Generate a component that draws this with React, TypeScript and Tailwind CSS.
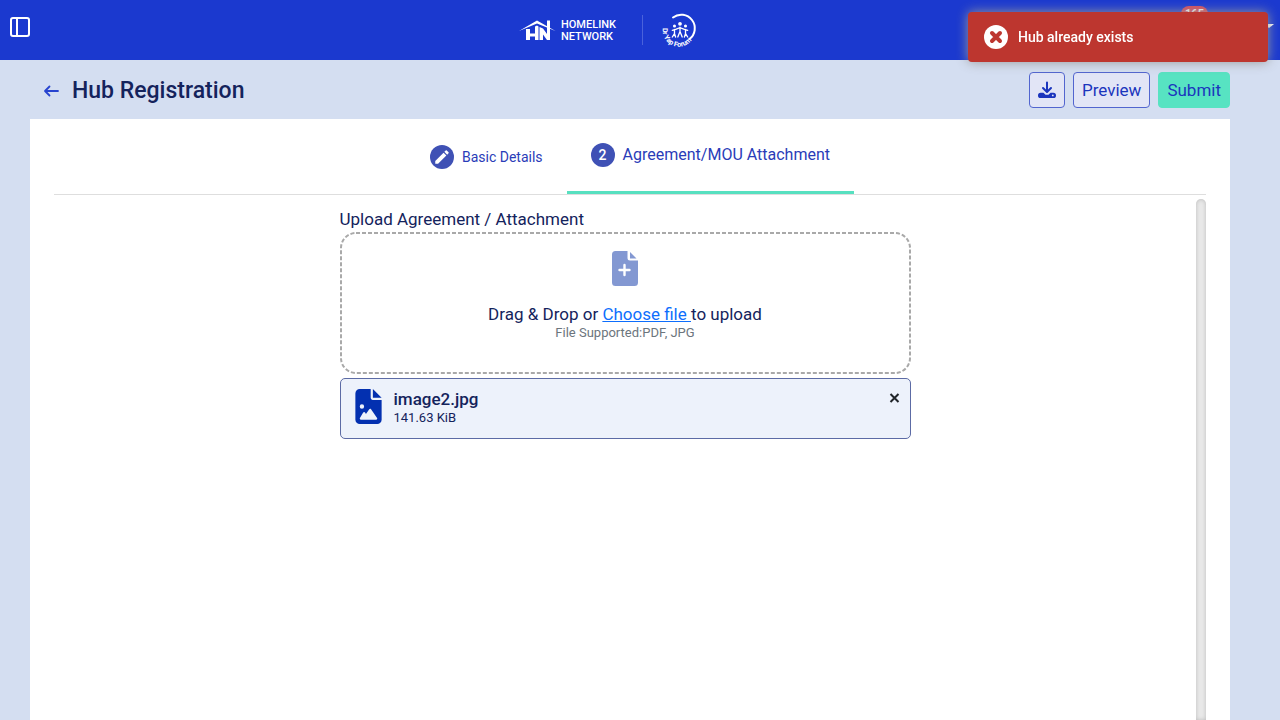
import React from "react";
import { FaFileImage } from "react-icons/fa6";
import { MdEdit } from "react-icons/md";

function SidebarIcon() {
  return (
    <svg width="20" height="20" viewBox="0 0 20 20" fill="none" stroke="#fff" strokeWidth="2">
      <rect x="1" y="1" width="18" height="18" rx="2" />
      <path d="M7 1v18" />
    </svg>
  );
}

function HomelinkLogo() {
  return (
    <svg width="38" height="22" viewBox="0 0 38 22" fill="#fff">
      <path d="M0 12 18 1.500 36.500 12 18 4.500Z" />
      <path d="M7 10h4v4.500h5V7.500l2-1 1.500 1V21H16v-3.500h-5V21H7Z" />
      <path d="M20.500 8 24 9.500l4 5.500V1.500h3V21h-3l-4-5.500V21h-3.500Z" />
    </svg>
  );
}

function ForumLogo() {
  return (
    <svg width="36" height="36" viewBox="0 0 36 36" fill="none" stroke="#fff" strokeLinecap="round">
      <path d="M12 5.500A13.500 13.500 0 0 1 28.500 27" strokeWidth="2" />
      <g transform="translate(-0.800 0.800) scale(1.100)">
        <circle cx="18" cy="10" r="1.700" fill="#fff" stroke="none" />
        <circle cx="13" cy="12" r="1.400" fill="#fff" stroke="none" />
        <circle cx="23" cy="12" r="1.400" fill="#fff" stroke="none" />
        <path d="M11 16l3-1 4-1.500 4 1.500 3 1M18 13v5M18 17l-2 5M18 17l2 5M13 15v4l-2 3M13 19l1 3M23 15v4l2 3M23 19l-1 3" strokeWidth="1.200" />
      </g>
      <path id="forum-arc" d="M2 16A16 16 0 0 0 30 29" stroke="none" />
      <text fill="#fff" stroke="none" className="font-['Roboto',sans-serif] text-[7px] font-bold">
        <textPath href="#forum-arc">Dr Yap Forum</textPath>
      </text>
    </svg>
  );
}

function DownloadIcon() {
  return (
    <svg width="18" height="18" viewBox="0 0 18 18" fill="none" stroke="#1b35bd" strokeWidth="2" strokeLinecap="round" strokeLinejoin="round">
      <path d="M9 1.500V10M5 7l4 4 4-4" />
      <path d="M2.600 11.800H5.500L7.500 13.800H10.500L12.500 11.800H15.400A2.200 2.200 0 0 1 15.400 17H2.600A2.200 2.200 0 0 1 2.600 11.800Z" fill="#1b35bd" stroke="none" />
      <circle cx="14.800" cy="14.400" r="0.900" fill="#e2e5f6" stroke="none" />
    </svg>
  );
}

function FilePlusIcon() {
  return (
    <svg width="26" height="36" viewBox="0 0 26 36" fill="#8398d2">
      <path d="M3.500 1H15.500V8Q15.500 10.500 18 10.500H26V32.500Q26 36 22.500 36H3.500Q0 36 0 32.500V4.500Q0 1 3.500 1Z" />
      <path d="M18 2 24.500 8.500H18Z" />
      <path d="M12.500 15v10M7.500 20h10" stroke="#fff" strokeWidth="2.400" strokeLinecap="round" />
    </svg>
  );
}

export default function App() {
  return (
    <div className="flex h-screen flex-col overflow-hidden bg-[#d4def1] font-['Roboto',sans-serif] text-[#14235c]">
      <header className="grid h-[60px] shrink-0 grid-cols-3 items-center bg-[#1b39cf] pr-1.5 pl-2.5 text-white">
        <button aria-label="Toggle sidebar" className="mb-1.5 justify-self-start">
          <SidebarIcon />
        </button>
        <div className="flex items-center justify-center pr-17">
          <div className="flex items-center gap-1">
            <HomelinkLogo />
            <span className="pt-0.5 text-[11px] leading-3 font-medium">HOMELINK<br />NETWORK</span>
          </div>
          <span className="mr-[18px] ml-[26px] h-[30px] w-px bg-[#4a62db]" />
          <ForumLogo />
        </div>
        <div className="flex items-center justify-end gap-14">
          <span className="mb-8 rounded-full bg-[#d84b5c] px-1 text-[11px] leading-4 font-bold">165</span>
          <span className="mb-2 h-0 w-0 border-x-5 border-t-4 border-x-transparent border-t-white" />
        </div>
      </header>

      <main className="flex min-h-0 grow flex-col pr-[50px] pl-[30px]">
        <div className="flex h-[59px] shrink-0 items-center justify-between pl-3">
          <div className="flex items-center gap-3">
            <a href="#back" aria-label="Back">
              <svg width="18" height="14" viewBox="0 0 18 14" fill="none" stroke="#2743cf" strokeWidth="1.800" strokeLinecap="round" strokeLinejoin="round">
                <path d="M16 8H3.500M7.500 3.500 3 8l4.500 4.500" />
              </svg>
            </a>
            <h1 className="pt-0.5 text-[23px] leading-8 font-medium">Hub Registration</h1>
          </div>
          <div className="flex gap-2 text-[17px] leading-6 text-[#1b35bd]">
            <button aria-label="Download" className="flex h-9 w-9 items-center justify-center rounded border border-[#5265cf] bg-[#e2e5f6]">
              <DownloadIcon />
            </button>
            <button className="h-9 rounded border border-[#5265cf] bg-[#e2e5f6] px-2">Preview</button>
            <button className="h-9 rounded border border-[#57e3c2] bg-[#57e3c2] px-2">Submit</button>
          </div>
        </div>

        <section className="flex min-h-0 grow flex-col bg-white px-6">
          <nav className="flex h-[76px] shrink-0 justify-center border-b border-[#dedede] text-[#2a3cb8]">
            <button className="flex items-center gap-2 px-6 text-sm">
              <span className="flex h-6 w-6 items-center justify-center rounded-full bg-[#3f51b5] text-white">
                <MdEdit size={18} />
              </span>
              Basic Details
            </button>
            <button className="flex items-center gap-2 border-b-3 border-[#57e0c0] px-6 text-base">
              <span className="flex h-6 w-6 items-center justify-center rounded-full bg-[#3f51b5] text-sm font-medium text-white">2</span>
              Agreement/MOU Attachment
            </button>
          </nav>
          <div className="flex min-h-0 grow pt-1">
            <div className="flex grow justify-center pt-2">
              <div className="w-1/2">
                <h2 className="text-[17px] leading-6">Upload Agreement / Attachment</h2>
                <div className="relative mt-px flex h-[142px] flex-col items-center pt-[18px]">
                  <svg className="absolute inset-0 h-full w-full" aria-hidden="true">
                    <rect x="1" y="1" rx="15" className="h-[calc(100%-2px)] w-[calc(100%-2px)] fill-none stroke-[#a9a9a9] stroke-2" strokeDasharray="4 2" />
                  </svg>
                  <FilePlusIcon />
                  <p className="relative mt-4 text-[17px] leading-6">
                    Drag &amp; Drop or <a href="#choose" className="text-[#0d6efd] underline">Choose file </a>to upload
                  </p>
                  <p className="text-[13px] leading-3.5 text-[#6c757d]">File Supported:PDF, JPG</p>
                </div>
                <div className="mt-1 flex h-[61px] items-start rounded-[5px] border border-[#5c6ba5] bg-[#edf2fb] px-2.5 pt-2.5">
                  <FaFileImage size={35} className="text-[#0330b0]" />
                  <div className="ml-2 grow">
                    <p className="text-[17px] leading-5 font-medium">image2.jpg</p>
                    <p className="text-[13px] leading-[18px]">141.63 KiB</p>
                  </div>
                  <button aria-label="Remove file" className="mt-1 text-[#212529]">
                    <svg width="11" height="11" viewBox="0 0 11 11" fill="none" stroke="currentColor" strokeWidth="2">
                      <path d="M1.500 1l8 8M9.500 1l-8 8" />
                    </svg>
                  </button>
                </div>
              </div>
            </div>
            <div className="w-2.5 rounded-t-full bg-[#e9e9e9] shadow-[inset_0_0_4px_#bbb]" />
          </div>
        </section>
      </main>

      <div role="alert" className="fixed top-3 right-3 flex h-[50px] w-[300px] items-center gap-2.5 rounded bg-[#bd362f] px-4 text-sm font-medium text-white shadow-[0_0_12px_#999]">
        <svg width="24" height="24" viewBox="0 0 24 24" fill="none">
          <circle cx="12" cy="12" r="12" fill="#fff" />
          <path d="M8 8l8 8M16 8l-8 8" stroke="#bd362f" strokeWidth="4" strokeLinecap="round" />
        </svg>
        Hub already exists
      </div>
    </div>
  );
}
